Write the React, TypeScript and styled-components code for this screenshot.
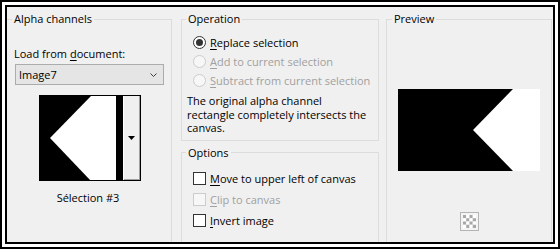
import React from "react";
import styled, { createGlobalStyle } from "styled-components";

const GlobalStyle = createGlobalStyle`
  html, body {
    margin: 0;
    padding: 0;
    background: #ffffff;
  }
  body {
    font-family: "Open Sans", "Noto Sans", sans-serif;
    font-size: 11px;
    color: #000000;
  }
`;

const App: React.FC = () => {
  return (
    <>
      <GlobalStyle />
      <Frame>
        <Dialog>
          <Group $noLeft $open style={{ width: 165 }}>
            <Legend $offset={5}>Alpha channels</Legend>
            <FieldLabel>
              Load from <Key>d</Key>ocument:
            </FieldLabel>
            <Combo>
              <span>Image7</span>
              <svg width="7" height="4" viewBox="0 0 7 4">
                <polyline points="0.5,0.5 3.5,3.5 6.5,0.5" fill="none" stroke="#404040" strokeWidth="1" />
              </svg>
            </Combo>
            <Thumb>
              <svg width="83" height="84" viewBox="0 0 83 84">
                <rect width="83" height="84" fill="#000" />
                <polygon points="51,0 10,42 50,84 76,84 76,0" fill="#fff" />
              </svg>
              <ThumbButton>
                <svg width="7" height="4" viewBox="0 0 7 4">
                  <polygon points="0,0 7,0 3.5,4" fill="#000" />
                </svg>
              </ThumbButton>
            </Thumb>
            <Caption>Sélection #3</Caption>
          </Group>

          <MiddleColumn>
            <Group>
              <Legend $offset={4}>Operation</Legend>
              <OptionList>
                <OptionRow>
                  <Radio $checked />
                  <span>
                    <Key>R</Key>eplace selection
                  </span>
                </OptionRow>
                <OptionRow $disabled>
                  <Radio $disabled />
                  <span>
                    <Key>A</Key>dd to current selection
                  </span>
                </OptionRow>
                <OptionRow $disabled>
                  <Radio $disabled />
                  <span>
                    <Key>S</Key>ubtract from current selection
                  </span>
                </OptionRow>
              </OptionList>
              <Note>
                The original alpha channel
                <br />
                rectangle completely intersects the
                <br />
                canvas.
              </Note>
            </Group>

            <Group $open style={{ marginTop: 5, flex: 1 }}>
              <Legend $offset={4}>Options</Legend>
              <CheckList>
                <CheckRow>
                  <Checkbox />
                  <span>
                    <Key>M</Key>ove to upper left of canvas
                  </span>
                </CheckRow>
                <CheckRow $disabled>
                  <Checkbox $disabled />
                  <span>
                    <Key>C</Key>lip to canvas
                  </span>
                </CheckRow>
                <CheckRow>
                  <Checkbox />
                  <span>
                    <Key>I</Key>nvert image
                  </span>
                </CheckRow>
              </CheckList>
            </Group>
          </MiddleColumn>

          <Group $open style={{ width: 166 }}>
            <Legend $offset={5}>Preview</Legend>
            <PreviewImage>
              <svg width="142" height="82" viewBox="0 0 142 82">
                <rect width="142" height="82" fill="#000" />
                <polygon points="115,0 75,41 115,82 142,82 142,0" fill="#fff" />
              </svg>
            </PreviewImage>
            <CheckerButton>
              <svg width="19" height="19" viewBox="0 0 19 19">
                <rect x="0.5" y="0.5" width="18" height="18" fill="#f4f4f4" stroke="#b4b4b4" />
                {[0, 1, 2, 3].map((r) =>
                  [0, 1, 2, 3].map((c) => (
                    <rect
                      key={`${r}-${c}`}
                      x={3 + c * 3.25}
                      y={3 + r * 3.25}
                      width="3.25"
                      height="3.25"
                      fill={(r + c) % 2 === 0 ? "#a8a8a8" : "#ffffff"}
                    />
                  ))
                )}
              </svg>
            </CheckerButton>
          </Group>
        </Dialog>
      </Frame>
    </>
  );
};

export default App;

const Frame = styled.div`
  width: 560px;
  height: 249px;
  box-sizing: border-box;
  border: 2px solid #000;
  padding: 3px;
  background: #fff;
`;

const Dialog = styled.div`
  height: 100%;
  box-sizing: border-box;
  border: 2px solid #000;
  background: #f0f0f0;
  overflow: hidden;
  display: flex;
  align-items: stretch;
  padding-top: 5px;
`;

const Group = styled.fieldset<{ $open?: boolean; $noLeft?: boolean }>`
  margin: 0;
  padding: 0;
  min-width: 0;
  box-sizing: border-box;
  border: 1px solid #dcdcdc;
  display: flex;
  flex-direction: column;
  ${(p) => (p.$open ? "border-bottom: none;" : "")}
  ${(p) => (p.$noLeft ? "border-left: none;" : "")}
`;

const Legend = styled.legend<{ $offset: number }>`
  margin-left: ${(p) => p.$offset}px;
  padding: 0 2px;
  line-height: 14px;
  font-size: 11px;
  color: #000;
`;

const MiddleColumn = styled.div`
  width: 198px;
  margin: 0 7px 0 9px;
  display: flex;
  flex-direction: column;
`;

const Key = styled.u`
  text-decoration: underline;
  text-underline-offset: 2px;
`;

const FieldLabel = styled.div`
  margin: 20px 0 0 7px;
  line-height: 15px;
`;

const Combo = styled.div`
  margin: 3px 0 0 8px;
  width: 149px;
  height: 21px;
  box-sizing: border-box;
  border: 1px solid #acacac;
  background: #e5e5e5;
  display: flex;
  align-items: center;
  justify-content: space-between;
  padding: 0 6px 0 3px;
  line-height: 15px;
`;

const Thumb = styled.div`
  margin: 10px 0 0 32px;
  width: 102px;
  height: 86px;
  box-sizing: border-box;
  border: 1px solid #000;
  display: flex;
  background: #fff;
`;

const ThumbButton = styled.div`
  flex: 1;
  margin-left: 1px;
  background: #f0f0f0;
  border-right: 1px solid #a0a0a0;
  border-bottom: 1px solid #a0a0a0;
  display: flex;
  align-items: center;
  justify-content: center;
`;

const Caption = styled.div`
  margin: 9px 0 0 30px;
  width: 102px;
  text-align: center;
  line-height: 15px;
`;

const OptionList = styled.div`
  margin: 7px 0 0 11px;
  display: flex;
  flex-direction: column;
`;

const OptionRow = styled.div<{ $disabled?: boolean }>`
  height: 19px;
  display: flex;
  align-items: center;
  gap: 4px;
  color: ${(p) => (p.$disabled ? "#a0a0a0" : "#000")};
`;

const Radio = styled.span<{ $checked?: boolean; $disabled?: boolean }>`
  width: 13px;
  height: 13px;
  box-sizing: border-box;
  border-radius: 50%;
  border: 1px solid ${(p) => (p.$disabled ? "#cccccc" : "#333333")};
  background: ${(p) => (p.$disabled ? "#f7f7f7" : "#ffffff")};
  display: flex;
  align-items: center;
  justify-content: center;
  flex-shrink: 0;
  &::after {
    content: "";
    width: 7px;
    height: 7px;
    border-radius: 50%;
    background: ${(p) => (p.$checked ? "#333333" : "transparent")};
  }
`;

const Note = styled.div`
  margin: 4px 0 5px 5px;
  line-height: 13.5px;
`;

const CheckList = styled.div`
  margin: 8px 0 0 11px;
  display: flex;
  flex-direction: column;
`;

const CheckRow = styled.div<{ $disabled?: boolean }>`
  height: 21px;
  display: flex;
  align-items: center;
  gap: 4px;
  color: ${(p) => (p.$disabled ? "#a0a0a0" : "#000")};
`;

const Checkbox = styled.span<{ $disabled?: boolean }>`
  width: 13px;
  height: 13px;
  box-sizing: border-box;
  border: 1px solid ${(p) => (p.$disabled ? "#cccccc" : "#333333")};
  background: ${(p) => (p.$disabled ? "#f7f7f7" : "#ffffff")};
  flex-shrink: 0;
`;

const PreviewImage = styled.div`
  margin-top: 63px;
  align-self: center;
  display: flex;
`;

const CheckerButton = styled.div`
  margin-top: 41px;
  align-self: center;
  display: flex;
`;
